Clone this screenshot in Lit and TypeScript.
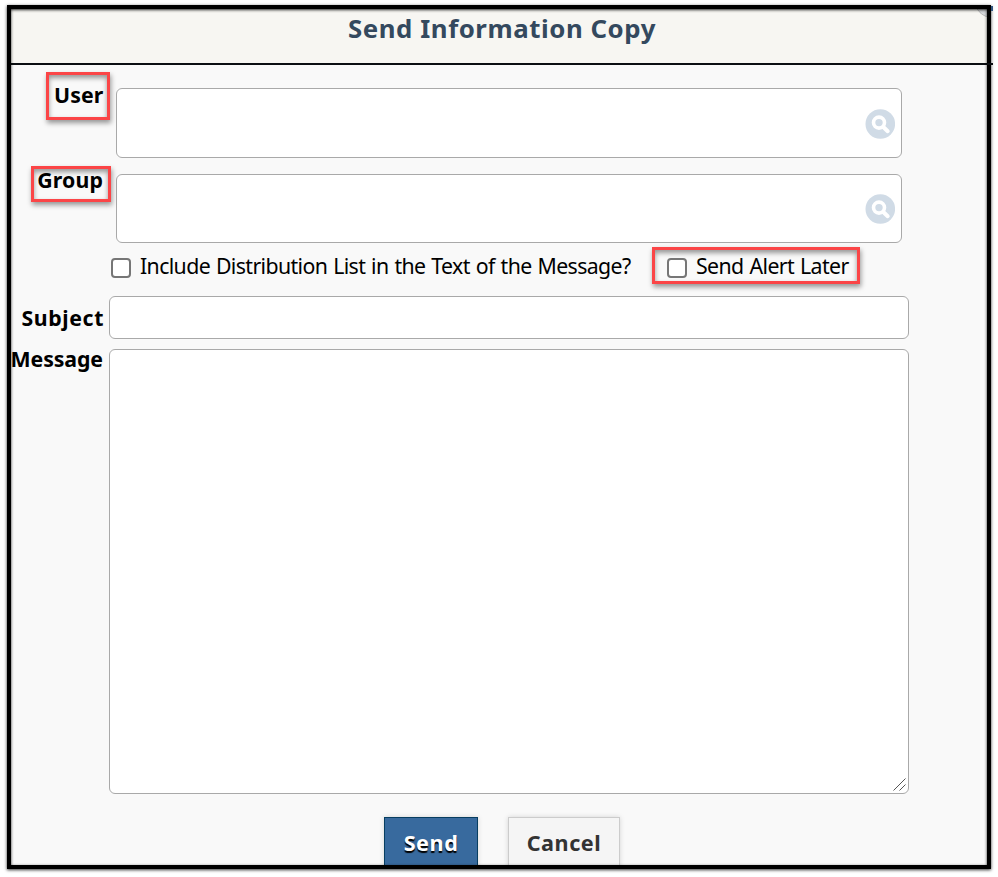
import { LitElement, html, css, svg } from "lit";
import { customElement } from "lit/decorators.js";

const searchIcon = html`<svg class="search" viewBox="0 0 30 30" width="30" height="30">
  ${svg`<circle cx="15.3" cy="15" r="14.8" fill="#d0dbe6"></circle>
  <circle cx="14" cy="13.6" r="5.5" fill="none" stroke="#fff" stroke-width="3.6"></circle>
  <path d="M18.3 18L22.7 22.2" stroke="#fff" stroke-width="4" stroke-linecap="round"></path>`}
</svg>`;

@customElement("app-root")
export class AppRoot extends LitElement {
  static styles = css`
    :host { display: block; width: 998px; height: 877px; background: #fff; overflow: hidden; box-sizing: border-box; padding: 5px 0 0 7px; font-family: "Noto Sans", "DejaVu Sans", sans-serif; color: #000; }
    * { box-sizing: border-box; }
    .frame { position: relative; width: 984px; height: 864px; border: 4px solid #000; background: #f9f9f9; box-shadow: 0 1px 3px 0 rgba(0,0,0,.8); }
    .frame::after { content: ""; position: absolute; inset: 0; box-shadow: inset 0 1px 3px rgba(0,0,0,.85); pointer-events: none; }
    .clip { height: 100%; overflow: hidden; }
    header { height: 56px; background: #f7f6f2; border-bottom: 2px solid #0b0e12; display: flex; justify-content: center; color: #34495e; }
    h1 { margin: 2px 0 0 6px; font-size: 25.8px; line-height: 34px; font-weight: 700; letter-spacing: .56px; white-space: nowrap; }
    .tail { position: absolute; left: 976px; top: 54px; width: 6px; height: 2px; background: #0b0e12; }
    .tip { position: absolute; left: 980px; top: -3px; width: 2px; height: 5px; background: #31557f; }
    .corner { position: absolute; right: 0; top: 0; }
    form { padding-top: 23px; }
    .row { display: flex; align-items: flex-start; }
    .label { width: 93px; padding-right: 1px; flex: none; display: flex; justify-content: flex-end; white-space: nowrap; font-weight: 700; font-size: 21.3px; line-height: 28px; letter-spacing: .12px; }
    .label-user { margin-top: -7px; padding-right: .5px; }
    .label-group { margin-top: -8px; }
    .label-subject { margin-top: 8px; letter-spacing: .6px; padding-right: 0; }
    .label-message { margin-top: -4px; letter-spacing: -.1px; }
    .row-group { margin-top: 16px; }
    .row-message { margin-top: 10px; }
    .field { background: #fff; border: 1px solid #a9a9a9; border-radius: 6px; flex: none; }
    .picker { width: 786px; height: 70px; margin-left: 12px; display: flex; align-items: center; justify-content: flex-end; padding: 2px 6px 0 0; }
    .group { height: 69px; padding-top: 1px; }
    .wide { width: 800px; margin-left: 5px; }
    .subject { height: 43px; }
    .message { height: 445px; display: flex; align-items: flex-end; justify-content: flex-end; padding: 0 2px 2px 0; }
    .marked { position: relative; }
    .mark { position: absolute; border: 3px solid #fb4547; box-shadow: 1px 3px 5px rgba(0,0,0,.4), inset 0 3px 5px rgba(0,0,0,.4); }
    .m-user { width: 64px; right: -6.5px; top: -9px; height: 48px; }
    .m-group { left: -6px; right: -8px; top: 0; height: 36px; }
    .m-alert { left: -15px; top: -5px; width: 208px; height: 37px; }
    .checks { display: flex; padding-left: 100px; height: 53px; padding-top: 9px; }
    .check { display: flex; height: 28px; font-size: 21.3px; line-height: 28px; letter-spacing: -.62px; word-spacing: 1px; white-space: nowrap; }
    .check.marked { letter-spacing: -.6px; }
    .box { width: 20px; height: 20px; margin: 6px 9px 0 0; border: 2px solid #767676; border-radius: 4px; background: #fff; flex: none; }
    .first { width: 556px; }
    .buttons { display: flex; gap: 30px; padding: 23px 0 0 373px; }
    .btn { height: 58px; border: 1px solid #ccc; background: #f5f5f5; color: #333; font-size: 21.6px; line-height: 50px; font-weight: 700; letter-spacing: .55px; text-align: center; box-shadow: 0 0 5px rgba(0,0,0,.15); }
    .send { width: 94px; background: #386a9e; border-color: #073e61; color: #fff; text-shadow: 0 2px 1px #000; }
    .cancel { width: 112px; }
  `;

  render() {
    return html`<div class="frame">
      <div class="clip">
        <header><h1>Send Information Copy</h1></header>
        <form>
          <div class="row">
            <div class="label label-user"><span class="marked">User<i class="mark m-user"></i></span></div>
            <div class="field picker">${searchIcon}</div>
          </div>
          <div class="row row-group">
            <div class="label label-group"><span class="marked">Group<i class="mark m-group"></i></span></div>
            <div class="field picker group">${searchIcon}</div>
          </div>
          <div class="checks">
            <div class="check first"><i class="box"></i><span>Include Distribution List in the Text of the Message?</span></div>
            <div class="check marked"><i class="box"></i><span>Send Alert Later</span><i class="mark m-alert"></i></div>
          </div>
          <div class="row">
            <div class="label label-subject">Subject</div>
            <div class="field wide subject"></div>
          </div>
          <div class="row row-message">
            <div class="label label-message">Message</div>
            <div class="field wide message">
              <svg width="13" height="13" viewBox="0 0 13 13"><path d="M.5 12.5l12-12M6.5 12.5l6-6" stroke="#555" fill="none"></path></svg>
            </div>
          </div>
          <div class="buttons"><div class="btn send">Send</div><div class="btn cancel">Cancel</div></div>
        </form>
      </div>
      <svg class="corner" width="10" height="8" viewBox="0 0 10 8"><path d="M0 0Q4 6 10 8V0Z" fill="#d7d9dc"></path><path d="M0 0Q4 6 10 8" fill="none" stroke="#bbb"></path></svg>
      <i class="tail"></i><i class="tip"></i>
    </div>`;
  }
}
